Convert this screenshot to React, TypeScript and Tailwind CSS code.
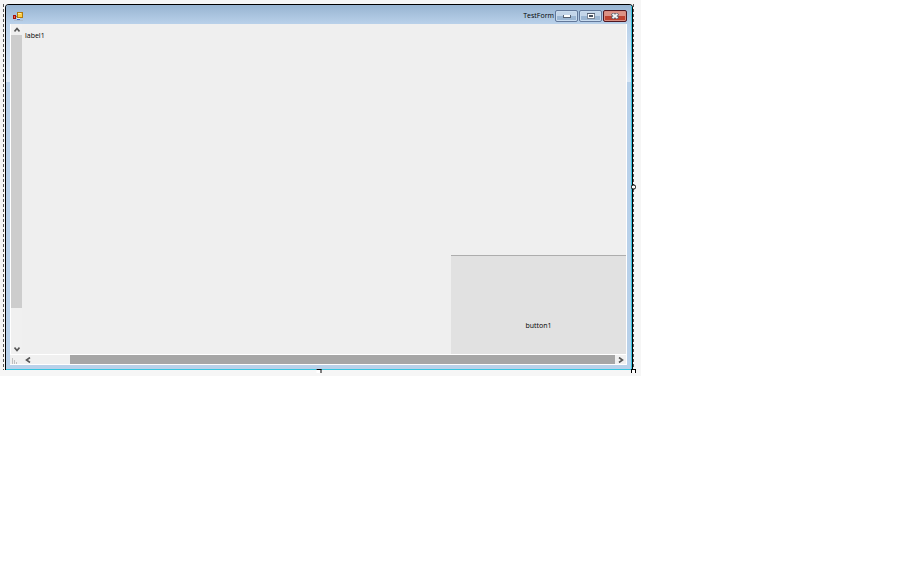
import React from 'react';

const Chevron: React.FC<{ d: string }> = ({ d }) => (
  <svg width="6" height="6" viewBox="0 0 6 6" fill="none" stroke="#555555" strokeWidth="1.6" aria-hidden="true">
    <path d={d} />
  </svg>
);

const FormIcon: React.FC = () => (
  <svg width="11" height="10" viewBox="0 0 11 10" shapeRendering="crispEdges" aria-hidden="true">
    <rect x="4" y="0" width="6" height="6" fill="#b07a10" />
    <rect x="5" y="1" width="4" height="4" fill="#ffcf45" />
    <rect x="5" y="1" width="3" height="1" fill="#ffefa8" />
    <rect x="0" y="3" width="3" height="4" fill="#a3120c" />
    <rect x="1" y="4" width="1" height="2" fill="#f06a50" />
    <rect x="3" y="4" width="1" height="1" fill="#7d8590" />
    <rect x="4" y="6" width="3" height="1" fill="#e8eef6" />
    <rect x="4" y="7" width="3" height="1" fill="#3f68c8" />
    <rect x="1" y="8" width="9" height="1" fill="#aebfd2" />
  </svg>
);

const captionButton =
  'flex h-3 items-center justify-center rounded-xs border border-[#62789a] bg-linear-to-b from-[#c3d5e9] from-50% to-[#9bb6d3] to-50% inset-ring inset-ring-[#c9dcef]';

const TitleBar: React.FC = () => (
  <header className="flex h-[19px] items-end bg-linear-to-b from-[#98b4d1] to-[#b9d1ea] pr-1 pb-0.5 pl-[7px]">
    <FormIcon />
    <h1 className="ml-auto pr-px text-[7px] leading-3 text-black">TestForm</h1>
    <div className="flex gap-px">
      <button type="button" aria-label="Minimize" className={`${captionButton} w-[23px]`}>
        <svg width="8" height="4" viewBox="0 0 8 4" shapeRendering="crispEdges">
          <rect width="8" height="3" y="1" fill="#566274" />
          <rect x="1" y="1" width="6" height="2" fill="#ffffff" />
        </svg>
      </button>
      <button type="button" aria-label="Maximize" className={`${captionButton} w-[23px]`}>
        <svg width="8" height="6" viewBox="0 0 8 6" shapeRendering="crispEdges">
          <rect width="8" height="6" fill="#7c8796" />
          <rect y="0" width="8" height="1" fill="#566274" />
          <rect x="1" y="1" width="6" height="4" fill="#ffffff" />
          <rect x="2" y="2" width="4" height="2" fill="#46505f" />
        </svg>
      </button>
      <button
        type="button"
        aria-label="Close"
        className="flex h-3 w-6 items-center justify-center rounded-xs border border-[#4f1722] bg-linear-to-b from-[#dd9286] from-50% to-[#bd4230] to-50% inset-ring inset-ring-[#d98c80]"
      >
        <svg width="8" height="6" viewBox="0 0 8 6">
          <path d="M1 0.5 7 5.5M7 0.5 1 5.5" stroke="#59606f" strokeWidth="3.4" />
          <path d="M1.5 1 6.5 5M6.5 1 1.5 5" stroke="#f5f5f5" strokeWidth="2" />
        </svg>
      </button>
    </div>
  </header>
);

const VerticalScroll: React.FC = () => (
  <div className="flex w-3 shrink-0 flex-col border-l border-white bg-[#f0f0f0]">
    <button type="button" aria-label="Scroll up" className="flex h-[11px] items-center justify-center">
      <Chevron d="M0.5 4.5 3 1.5 5.5 4.5" />
    </button>
    <div className="flex grow flex-col">
      <div className="grow-[273] bg-[#cdcdcd]" />
      <div className="grow-[36]" />
    </div>
    <button type="button" aria-label="Scroll down" className="flex h-2.5 items-center justify-center">
      <Chevron d="M0.5 1.5 3 4.5 5.5 1.5" />
    </button>
  </div>
);

const HorizontalScroll: React.FC = () => (
  <div className="flex h-[11px] border-y border-white bg-[#f0f0f0]">
    <div className="flex w-3 shrink-0 items-end pl-0.5">
      <svg width="6" height="6" viewBox="0 0 6 6" shapeRendering="crispEdges" fill="#bfbfbf" aria-hidden="true">
        <rect x="0" y="0" width="1" height="6" />
        <rect x="2" y="2" width="1" height="4" />
        <rect x="4" y="4" width="1" height="2" />
      </svg>
    </div>
    <button type="button" aria-label="Scroll left" className="flex w-3 items-center justify-center">
      <Chevron d="M5 0.5 1.5 3 5 5.5" />
    </button>
    <div className="flex grow">
      <div className="w-9" />
      <div className="grow bg-[#a6a6a6]" />
    </div>
    <button type="button" aria-label="Scroll right" className="flex w-[11px] items-center justify-center">
      <Chevron d="M1 0.5 4.5 3 1 5.5" />
    </button>
  </div>
);

const sideBorder =
  'w-1 shrink-0 bg-[linear-gradient(to_bottom,#b9d1ea_0,#dbe8f6_58px,#b9d1ea_58px)]';

const handle = 'absolute border border-black bg-white';

const App: React.FC = () => {
  return (
    <main className="min-h-screen bg-white pr-[280px] font-['Open_Sans','Noto_Sans',sans-serif]">
      <div className="bg-[#f6f6f6] pt-1 pr-[7px] pb-1.5 pl-[3px]">
        <div className="relative flex pr-px pl-0.5">
          <div className="absolute inset-y-0 left-0 w-px bg-[repeating-linear-gradient(to_bottom,#555555_0_3px,transparent_3px_5px)]" />
          <div className="absolute inset-y-0 right-0 w-px bg-[repeating-linear-gradient(to_bottom,#555555_0_3px,transparent_3px_5px)]" />

          <section className="grow rounded-t-sm border-x border-t border-black bg-[#b9d1ea]">
            <div className="overflow-hidden rounded-t-xs border-r border-b border-[#35c5e0]">
              <TitleBar />
              <div className="flex">
                <div className={sideBorder} />
                <div className="grow border-r border-white bg-[#efefef]">
                  <div className="flex">
                    <VerticalScroll />
                    <div className="flex min-h-[330px] grow flex-col pt-1.5">
                      <p className="pl-[3px] text-[7px] leading-3 text-black">label1</p>
                      <button
                        type="button"
                        className="mt-auto h-[99px] w-[29%] self-end border-t border-[#adadad] bg-[#e1e1e1] pt-[42px] text-[7px] leading-3 text-black"
                      >
                        button1
                      </button>
                    </div>
                  </div>
                  <HorizontalScroll />
                </div>
                <div className={sideBorder} />
              </div>
              <div className="h-1 bg-[#b9d1ea]" />
            </div>
          </section>

          <span className={`${handle} top-1/2 -right-0.5 h-[5px] w-[5px] -translate-y-1/2 rounded-xs`} />
          <span className={`${handle} -right-0.5 -bottom-[3px] h-1 w-[5px] border-b-0`} />
          <span className={`${handle} -bottom-[3px] left-1/2 h-1 w-[5px] -translate-x-1/2 border-b-0 border-l-0`} />
        </div>
      </div>
    </main>
  );
};

export default App;
